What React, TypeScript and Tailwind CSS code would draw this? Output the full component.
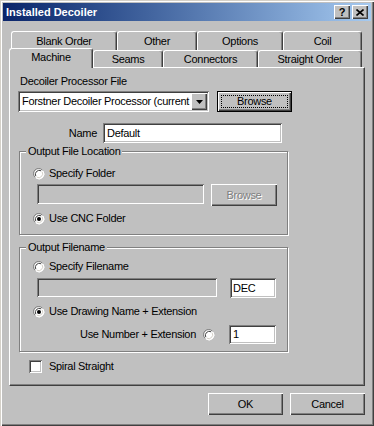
import React from "react";

const raised =
  "bg-[#c0c0c0] shadow-[inset_1px_1px_0_#fff,inset_-1px_-1px_0_#404040,inset_-2px_-2px_0_#808080]";
const sunken =
  "shadow-[inset_1px_1px_0_#808080,inset_-1px_-1px_0_#fff,inset_2px_2px_0_#404040,inset_-2px_-2px_0_#c0c0c0]";

function Tab({ label, w, selected }: { label: string; w: string; selected?: boolean }) {
  return (
    <div
      className={`${w} ${
        selected ? "h-[20px] relative top-[1px] z-10 pb-[3px]" : "h-full"
      } flex items-center justify-center bg-[#c0c0c0] border-l border-t border-white border-r border-r-[#404040] shadow-[inset_-1px_0_0_#808080] rounded-t-[3px]`}
    >
      {label}
    </div>
  );
}

function Radio({ checked }: { checked?: boolean }) {
  return (
    <svg width="12" height="12" viewBox="0 0 12 12" className="shrink-0">
      <circle cx="6" cy="6" r="5" fill="#fff" />
      <path d="M2 9.3 A5 5 0 0 1 9.3 2" fill="none" stroke="#808080" strokeWidth="1" />
      <path d="M2.8 8.2 A4 4 0 0 1 8.2 2.8" fill="none" stroke="#404040" strokeWidth="1" />
      <path d="M10 3 A5 5 0 0 1 3 10" fill="none" stroke="#fff" strokeWidth="1" />
      <path d="M9.2 3.8 A4 4 0 0 1 3.8 9.2" fill="none" stroke="#d4d0c8" strokeWidth="1" />
      {checked && <circle cx="6" cy="6" r="2" fill="#000" />}
    </svg>
  );
}

function Group({ title, children }: { title: string; children: React.ReactNode }) {
  return (
    <div className="relative ml-[1px] w-[269px] border border-[#808080] shadow-[inset_1px_1px_0_#fff,1px_1px_0_#fff]">
      <span className="absolute -top-[7px] left-[6px] px-[2px] bg-[#c0c0c0] leading-[13px]">
        {title}
      </span>
      {children}
    </div>
  );
}

export default function App() {
  return (
    <div
      className="w-[374px] h-[426px] bg-[#c0c0c0] p-[3px] text-[11px] tracking-[-0.3px] text-black shadow-[inset_1px_1px_0_#d4d0c8,inset_2px_2px_0_#fff,inset_-1px_-1px_0_#404040,inset_-2px_-2px_0_#808080]"
      style={{ fontFamily: '"Liberation Sans", Arial, sans-serif' }}
    >
      {/* title bar */}
      <div className="h-[18px] flex items-center justify-between bg-gradient-to-r from-[#0a246a] to-[#a6caf0] pl-[3px] pr-[3px]">
        <span className="text-white font-bold text-[11px] tracking-normal">Installed Decoiler</span>
        <div className="flex gap-[2px]">
          <div className={`${raised} w-[16px] h-[14px] flex items-center justify-center font-bold text-[11px] leading-none`}>
            ?
          </div>
          <div className={`${raised} w-[16px] h-[14px] flex items-center justify-center`}>
            <svg width="8" height="7" viewBox="0 0 8 7">
              <path d="M0.5 0.5 L7.5 6.5 M7.5 0.5 L0.5 6.5" stroke="#000" strokeWidth="1.6" />
            </svg>
          </div>
        </div>
      </div>

      {/* tabs */}
      <div className="mt-[10px] ml-[8px] h-[19px] flex">
        <Tab label="Blank Order" w="w-[106px]" />
        <Tab label="Other" w="w-[80px]" />
        <Tab label="Options" w="w-[86px]" />
        <Tab label="Coil" w="w-[79px]" />
      </div>
      <div className="ml-[6px] h-[17px] flex items-end">
        <Tab label="Machine" w="w-[84px]" selected />
        <Tab label="Seams" w="w-[70px]" />
        <Tab label="Connectors" w="w-[95px]" />
        <Tab label="Straight Order" w="w-[104px]" />
      </div>

      {/* panel */}
      <div className="ml-[6px] w-[356px] h-[319px] border-l border-t border-white border-r border-b border-r-[#404040] border-b-[#404040] shadow-[inset_-1px_-1px_0_#808080] pl-[8px] pt-[7px] leading-[13px]">
        <div className="ml-[2px]">Decoiler Processor File</div>
        <div className="mt-[3px] flex gap-[8px]">
          <div className={`${sunken} bg-white w-[191px] h-[21px] flex items-center pl-[4px] pr-[2px]`}>
            <span className="flex-1 whitespace-nowrap">Forstner Decoiler Processor (current</span>
            <div className={`${raised} w-[16px] h-[17px] shrink-0 flex items-center justify-center`}>
              <svg width="7" height="4" viewBox="0 0 7 4">
                <path d="M0 0 H7 L3.5 4 Z" fill="#000" />
              </svg>
            </div>
          </div>
          <div className="w-[75px] h-[21px] border border-black">
            <div className={`${raised} w-full h-full p-[3px]`}>
              <div className="w-full h-full border border-dotted border-black flex items-center justify-center">
                Browse
              </div>
            </div>
          </div>
        </div>

        <div className="mt-[11px] flex items-center gap-[6px]">
          <div className="w-[79px] text-right">Name</div>
          <div className={`${sunken} bg-white w-[179px] h-[20px] flex items-center pl-[4px]`}>Default</div>
        </div>

        <div className="mt-[8px]">
          <Group title="Output File Location">
            <div className="pl-[13px] pt-[15px] pb-[9px]">
              <div className="flex items-center gap-[4px] h-[13px]">
                <Radio />
                <span>Specify Folder</span>
              </div>
              <div className="mt-[4px] ml-[4px] flex items-start gap-[7px]">
                <div className={`${sunken} bg-[#c0c0c0] w-[167px] h-[20px]`} />
                <div className={`${raised} w-[66px] h-[22px] flex items-center justify-center text-[#808080] [text-shadow:1px_1px_0_#fff]`}>
                  Browse
                </div>
              </div>
              <div className="mt-[6px] flex items-center gap-[4px] h-[13px]">
                <Radio checked />
                <span>Use CNC Folder</span>
              </div>
            </div>
          </Group>
        </div>

        <div className="mt-[12px]">
          <Group title="Output Filename">
            <div className="pl-[13px] pt-[12px] pb-[7px] pr-[11px]">
              <div className="flex items-center gap-[4px] h-[13px]">
                <Radio />
                <span>Specify Filename</span>
              </div>
              <div className="mt-[5px] ml-[4px] flex items-start gap-[13px]">
                <div className={`${sunken} bg-[#c0c0c0] w-[180px] h-[19px]`} />
                <div className={`${sunken} bg-white w-[46px] h-[20px] flex items-center pl-[3px]`}>DEC</div>
              </div>
              <div className="mt-[7px] flex items-center gap-[4px] h-[13px]">
                <Radio checked />
                <span>Use Drawing Name + Extension</span>
              </div>
              <div className="mt-[7px] flex items-center justify-end">
                <span>Use Number + Extension</span>
                <span className="ml-[7px]">
                  <Radio />
                </span>
                <div className={`${sunken} ml-[14px] bg-white w-[47px] h-[19px] flex items-center pl-[4px]`}>1</div>
              </div>
            </div>
          </Group>
        </div>

        <div className="mt-[8px] ml-[11px] flex items-center gap-[7px]">
          <div className={`${sunken} bg-white w-[13px] h-[13px]`} />
          <span>Spiral Straight</span>
        </div>
      </div>

      {/* footer */}
      <div className="mt-[7px] pr-[6px] flex justify-end gap-[7px]">
        <div className={`${raised} w-[75px] h-[22px] flex items-center justify-center`}>OK</div>
        <div className={`${raised} w-[75px] h-[22px] flex items-center justify-center`}>Cancel</div>
      </div>
    </div>
  );
}
